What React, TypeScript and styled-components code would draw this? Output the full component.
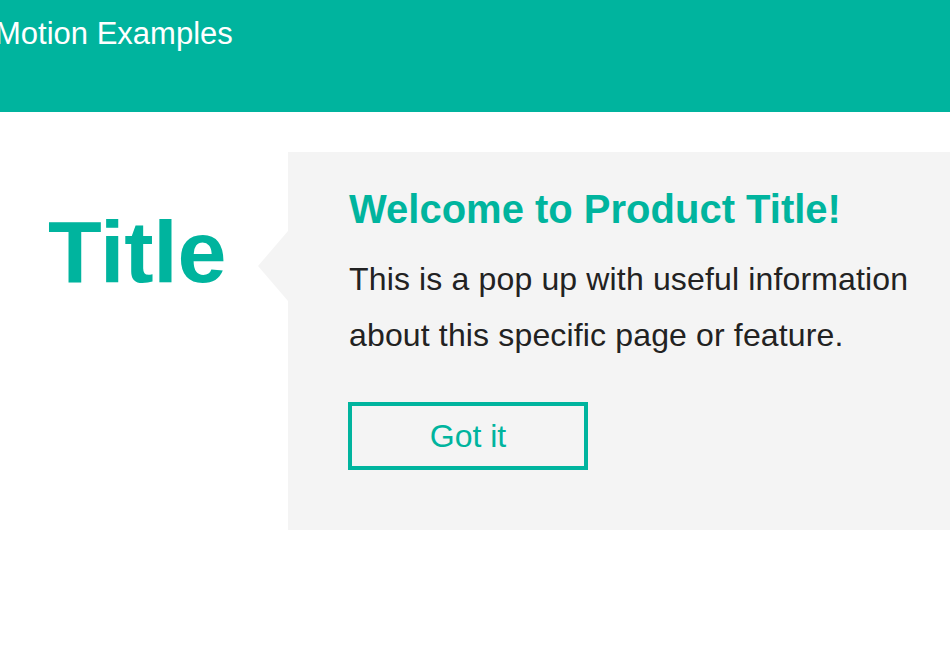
import React from "react";
import styled, { createGlobalStyle } from "styled-components";

const teal = "#00b49e";

const Global = createGlobalStyle`
  html, body { margin: 0; padding: 0; background: #fff; }
  body { font-family: "Liberation Sans", Arial, Helvetica, sans-serif; overflow: hidden; }
  * { box-sizing: border-box; }
`;

const Header = styled.header`
  height: 112px;
  background: ${teal};
  padding-top: 18px;
  overflow: hidden;
`;

const HeaderTitle = styled.div`
  margin-left: -5px;
  color: #fff;
  font-size: 31px;
  line-height: 31px;
  white-space: nowrap;
`;

const Main = styled.main`
  display: flex;
  align-items: flex-start;
  padding-top: 40px;
`;

const TitleColumn = styled.div`
  flex: 0 0 288px;
  padding-left: 48px;
`;

const PageTitle = styled.h1`
  margin: 56px 0 0;
  color: ${teal};
  font-size: 88px;
  line-height: 1;
  font-weight: 700;
  letter-spacing: -0.2px;
`;

const Popup = styled.section`
  position: relative;
  flex: 1;
  background: #f4f4f4;
  padding: 37px 0 60px 61px;

  &::before {
    content: "";
    position: absolute;
    left: -30px;
    top: 79px;
    width: 30px;
    height: 70px;
    background: #f4f4f4;
    clip-path: polygon(100% 0, 0 50%, 100% 100%);
  }
`;

const PopupHeading = styled.h2`
  margin: 0;
  color: ${teal};
  font-size: 40px;
  line-height: 1;
  font-weight: 700;
  white-space: nowrap;
`;

const PopupText = styled.p`
  margin: 22px 0 0;
  max-width: 580px;
  color: #222;
  font-size: 32px;
  line-height: 56px;
  letter-spacing: 0.15px;
`;

const GotItButton = styled.button`
  display: block;
  margin-top: 39px;
  margin-left: -1px;
  width: 240px;
  height: 68px;
  border: 4px solid ${teal};
  background: transparent;
  color: ${teal};
  font-family: inherit;
  font-size: 32px;
  padding: 0;
  cursor: pointer;
`;

export default function App() {
  return (
    <>
      <Global />
      <Header>
        <HeaderTitle>Motion Examples</HeaderTitle>
      </Header>
      <Main>
        <TitleColumn>
          <PageTitle>Title</PageTitle>
        </TitleColumn>
        <Popup>
          <PopupHeading>Welcome to Product Title!</PopupHeading>
          <PopupText>
            This is a pop up with useful information about this specific page or feature.
          </PopupText>
          <GotItButton>Got it</GotItButton>
        </Popup>
      </Main>
    </>
  );
}
